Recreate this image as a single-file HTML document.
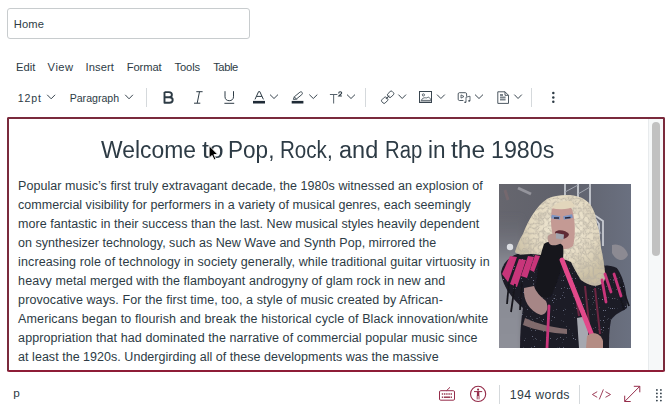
<!DOCTYPE html>
<html><head><meta charset="utf-8">
<style>
*{margin:0;padding:0;box-sizing:border-box}
html,body{width:672px;height:412px;overflow:hidden;background:#fff}
body{position:relative;font-family:"Liberation Sans",sans-serif;color:#2d3b45}
.t{position:absolute;white-space:nowrap;line-height:1}
#inp{position:absolute;left:7px;top:8px;width:243px;height:31px;border:1px solid #c8ccce;border-radius:3px;background:#fff}
.sep{position:absolute;width:1px;background:#d5d9dc}
#frame{position:absolute;left:7px;top:117px;width:658px;height:255px;border:2px solid #7a2a3c;border-bottom-color:#8e1d37;border-radius:2px}
#track{position:absolute;left:648px;top:119px;width:15px;height:251px;background:#f6f8f9;border-left:1px solid #e8ebed}
#thumb{position:absolute;left:652px;top:122px;width:8px;height:134px;background:#c1c1c1;border-radius:4px}
svg{position:absolute;overflow:visible}
</style></head><body>
<div id="inp"></div>

<!-- toolbar separators -->
<div class="sep" style="left:146px;top:88px;height:19px"></div>
<div class="sep" style="left:365.2px;top:88px;height:19px"></div>
<div class="sep" style="left:531.3px;top:88px;height:19px"></div>

<!-- toolbar icons -->
<svg width="672" height="120" style="left:0;top:0" fill="none" stroke="#2d3b45" stroke-width="1">
  <g stroke="#3a4650" stroke-width="1">
    <polyline points="47.2,94.8 51.15,98.8 55.1,94.8"/>
    <polyline points="125.2,94.8 129.05,98.8 132.9,94.8"/>
    <polyline points="270,94.6 274,98.5 278,94.6"/>
    <polyline points="309.3,94.6 313.3,98.5 317.3,94.6"/>
    <polyline points="347,94.6 351,98.5 355,94.6"/>
    <polyline points="398.4,94.6 402.2,98.5 406,94.6"/>
    <polyline points="437,94.6 440.9,98.5 444.8,94.6"/>
    <polyline points="475,94.6 479,98.5 483,94.6"/>
    <polyline points="514.3,94.6 518.05,98.5 521.8,94.6"/>
  </g>
  <!-- B -->
  <path d="M164.5,92.1 H168.9 C170.9,92.1 171.9,93.3 171.9,94.7 C171.9,96.1 170.9,97.3 168.9,97.3 H164.5 M164.5,97.3 H169.4 C171.6,97.3 172.7,98.6 172.7,100.05 C172.7,101.5 171.6,102.75 169.4,102.75 H164.5 Z M164.5,92.1 V102.75" stroke-width="1.9" stroke-linejoin="round"/>
  <!-- I -->
  <path d="M196.3,91.7 h6.3 M194,103.2 h6.3 M199.5,91.7 l-2.3,11.5" stroke-width="1"/>
  <!-- U -->
  <path d="M225,91.2 v5.6 c0,2.4 1.8,3.9 4.25,3.9 c2.45,0 4.25,-1.5 4.25,-3.9 v-5.6" stroke-width="1"/>
  <path d="M224.4,103.3 h9.8" stroke-width="1"/>
  <!-- A text color -->
  <path d="M255,99.4 L258.6,91.6 h1.2 L263.4,99.4 M256.5,96.4 h5.4" stroke-width="1" stroke="#2d3b45"/>
  <rect x="253" y="100.9" width="12" height="2.6" fill="#1f2b36" stroke="none"/>
  <!-- highlighter -->
  <path d="M293.4,99.4 l0.9,-2.6 l5.6,-4.6 c0.7,-0.6 1.7,-0.5 2.2,0.2 c0.5,0.7 0.4,1.6 -0.3,2.2 l-5.6,4.6 z M294.3,96.8 l2.5,2.7" stroke-width="0.9" stroke="#2d3b45"/>
  <rect x="291.7" y="100.9" width="11.7" height="2.6" fill="#1f2b36" stroke="none"/>
  <!-- T2 -->
  <path d="M329.9,94.5 h7.5 M333.65,94.5 v9" stroke="#56616b" stroke-width="1"/>
  <path d="M338.7,93.4 c0,-1.1 0.7,-1.6 1.5,-1.6 c0.9,0 1.5,0.5 1.5,1.3 c0,1.1 -2.4,2.1 -3,2.9 h3.2" stroke="#2d3b45" stroke-width="1.1"/>
  <!-- link -->
  <g transform="rotate(-45 387.6 97.3)" stroke-width="0.9" stroke="#3a4650">
    <rect x="380.4" y="95" width="6.2" height="4.6" rx="1.5"/>
    <rect x="388.8" y="95" width="6.2" height="4.6" rx="1.5"/>
    <path d="M385.2,97.3 h4.8" stroke-width="1"/>
  </g>
  <!-- image -->
  <rect x="419.5" y="91.5" width="12" height="11" stroke-width="1" stroke="#3a4650"/>
  <path d="M420.3,101.7 h10.4" stroke-width="0.5" stroke="#3a4650"/>
  <circle cx="423.4" cy="94.9" r="1.1" stroke-width="0.8" stroke="#3a4650"/>
  <path d="M421,100.4 C422.3,98.6 423.8,97.4 425.4,97.8 C426.6,98.4 427.4,97.2 428.6,97.2 C429.8,97.6 430.6,99 430.9,100.4 Z" stroke-width="0.8" stroke="#3a4650"/>
  <!-- media -->
  <path d="M466.6,96.5 v-2.6 c0,-0.7 -0.5,-1.2 -1.2,-1.2 h-6 c-0.7,0 -1.2,0.5 -1.2,1.2 v5.4 c0,0.7 0.5,1.2 1.2,1.2 h4" stroke-width="0.9" stroke="#3a4650"/>
  <path d="M461,94.9 v3.2 l3,-1.6 z" stroke-width="0.8" stroke="#3a4650"/>
  <path d="M466,102.2 v-5 l4,-1 v4.6" stroke-width="0.8" stroke="#3a4650"/>
  <ellipse cx="465.2" cy="102.3" rx="1" ry="0.8" fill="#3a4650" stroke="none"/>
  <ellipse cx="469.2" cy="100.9" rx="1" ry="0.8" fill="#3a4650" stroke="none"/>
  <!-- document -->
  <path d="M497.8,91.8 h7.2 l3.5,3.5 v8.1 h-10.7 z M505,91.8 v3.5 h3.5" stroke-width="0.9" stroke="#3a4650"/>
  <path d="M500,94 h3 v2 h-3 z M500,96.6 h5.6 v1.6 h-5.6 z M500,98.8 h5.6 v1.6 h-5.6 z" fill="#7d868e" stroke="none"/>
  <!-- dots -->
  <circle cx="553.3" cy="93" r="1.25" fill="#2d3b45" stroke="none"/>
  <circle cx="553.3" cy="97.4" r="1.25" fill="#2d3b45" stroke="none"/>
  <circle cx="553.3" cy="101.8" r="1.25" fill="#2d3b45" stroke="none"/>
</svg>

<div id="frame"></div>
<div id="track"></div>
<div id="thumb"></div>

<!-- photo -->
<svg width="132" height="164" style="left:499px;top:184px;overflow:hidden" viewBox="0 0 132 164">
  <defs>
    <linearGradient id="bg" x1="0" y1="0" x2="1" y2="0">
      <stop offset="0" stop-color="#66666e"/>
      <stop offset="0.5" stop-color="#5f616b"/>
      <stop offset="1" stop-color="#6a7080"/>
    </linearGradient>
    <linearGradient id="lft" x1="0" y1="0" x2="0" y2="1">
      <stop offset="0" stop-color="#6e6f78" stop-opacity="0"/>
      <stop offset="0.35" stop-color="#888a93"/>
      <stop offset="1" stop-color="#8e9099"/>
    </linearGradient>
    <radialGradient id="hairg" cx="0.55" cy="0.35" r="0.6">
      <stop offset="0" stop-color="#f2ebd8"/>
      <stop offset="0.6" stop-color="#e4dac2"/>
      <stop offset="1" stop-color="#cabfa4"/>
    </radialGradient>
    <filter id="soft" x="-10%" y="-10%" width="120%" height="120%"><feGaussianBlur stdDeviation="0.6"/></filter>
    <filter id="soft2" x="-30%" y="-30%" width="160%" height="160%"><feGaussianBlur stdDeviation="3"/></filter>
    <filter id="curl" x="-5%" y="-5%" width="110%" height="110%">
      <feTurbulence type="turbulence" baseFrequency="0.2" numOctaves="2" seed="7" result="n"/>
      <feColorMatrix in="n" type="matrix" values="0 0 0 0 0.47  0 0 0 0 0.43  0 0 0 0 0.36  0 0 0 -1.8 0.75" result="dark"/>
      <feComposite in="dark" in2="SourceGraphic" operator="in" result="dk"/>
      <feMerge><feMergeNode in="SourceGraphic"/><feMergeNode in="dk"/></feMerge>
      <feGaussianBlur stdDeviation="0.45"/>
    </filter>
    <filter id="sparkle" x="0" y="0" width="100%" height="100%">
      <feTurbulence type="fractalNoise" baseFrequency="0.9" numOctaves="1" seed="11" result="n"/>
      <feColorMatrix in="n" type="matrix" values="0 0 0 0 0.2  0 0 0 0 0.22  0 0 0 0 0.32  0 0 0 9 -6.2" result="s"/>
      <feComposite in="s" in2="SourceGraphic" operator="in" result="sp"/>
      <feMerge><feMergeNode in="SourceGraphic"/><feMergeNode in="sp"/></feMerge>
    </filter>
  </defs>
  <rect width="132" height="164" fill="url(#bg)"/>
  <rect x="-6" y="30" width="30" height="140" fill="url(#lft)" filter="url(#soft2)"/>
  <g filter="url(#soft)">
  <path d="M6,6 L9,16" stroke="#74686e" stroke-width="3"/>
  <path d="M19,4 L32,10" stroke="#94949c" stroke-width="3"/>
  <circle cx="11" cy="63" r="3.2" fill="#dcdee3"/>
  <path d="M66,0 V18 M79,0 V16 M91,0 V28 L100,40 V62 M91,28 L104,37 V62" stroke="#c6c9d0" stroke-width="1.8" fill="none"/>
  <path d="M66,8 L79,1 M79,10 L91,3 M79,14 L91,22 M93,31 L102,50" stroke="#a2a6b0" stroke-width="1" fill="none"/>
  <path d="M113,61 C119,59 127,63 129,71 C125,79 117,77 113,69 Z" fill="#8c8a92"/>
  </g>
  <!-- body -->
  <g filter="url(#sparkle)">
  <path d="M2,88 C4,78 12,70 26,68 C42,66 62,70 76,78 C90,86 106,78 118,84 C126,96 128,110 128,124 C122,128 116,130 112,136 C110,146 110,156 110,164 H21 C21,150 22,136 24,124 C14,116 3,102 2,88 Z" fill="#1d1c27"/>
  </g>
  <!-- hair -->
  <g filter="url(#curl)">
  <path d="M16,68 C18,62 20,56 24,50 C27,42 30,36 34,30 C38,24 42,19 48,15 C54,12 60,11 68,11 C76,11 84,13 90,19 C95,25 97,32 98,40 C101,48 101,56 102,64 C104,72 105,80 106,88 C107,95 105,100 100,101 C94,103 88,100 82,96 C78,90 75,84 72,78 C66,75 58,73 50,73 C44,71 38,70 32,70 C26,70 20,72 16,68 Z" fill="url(#hairg)"/>
  </g>
  <g filter="url(#soft)">
  <!-- face -->
  <path d="M53,25 C57,20 69,20 73,25 C76,35 77,50 74,62 C68,67 60,66 56,58 C52,48 51,36 53,25 Z" fill="#c49a94"/>
  <path d="M52,24 C60,26 69,26 76,22 L72,17 C66,17 58,17 52,24 Z" fill="#e2d6bc"/>
  <path d="M52.5,32.5 l8.5,1.5 M64.5,34 l9,-2" stroke="#7d95c4" stroke-width="3.6"/>
  <path d="M55,34 l5,0 M66,34 l5.5,-0.5" stroke="#25253a" stroke-width="1.4"/>
  <path d="M56,48 C59,45 67,46 70,50 C69,55 61,57 57,53 Z" fill="#5e2a34"/>
  <!-- glove arm -->
  <path d="M45,60 C50,56 60,56 64,62 C66,76 60,96 52,112 C46,116 38,112 36,106 C38,92 40,74 45,60 Z" fill="#15151d"/>
  <path d="M49,52 C53,48 62,49 64,55 C64,60 58,62 52,61 C49,59 48,55 49,52 Z" fill="#b89690"/>
  <path d="M57,49 l8,1.5 l-0.5,5 l-7.5,-1 z" fill="#a2a4ae"/>
  <!-- skin arm -->
  <path d="M25,104 C24,116 30,127 42,131 C48,130 50,124 47,117 C41,112 37,108 35,102 Z" fill="#a68686"/>
  <!-- midriff -->
  <path d="M26,134 C38,140 52,143 68,145 L68,150 C52,149 36,146 24,141 Z" fill="#806a6c"/>
  <!-- pink fringe left -->
  <g fill="#c8347a">
    <path d="M3,90 L11,72 L18,73 L9,98 Z"/>
    <path d="M11,100 L20,75 L27,76 L18,103 Z"/>
    <path d="M22,92 L29,72 L35,73 L28,94 Z"/>
    <path d="M31,86 L36,71 L41,72 L35,88 Z"/>
  </g>
  <g stroke="#18171f" stroke-width="1.8" fill="none">
    <path d="M10,98 L8,120"/><path d="M16,100 L12,128"/><path d="M23,98 L21,126"/><path d="M117,98 L125,126"/><path d="M122,100 L130,122"/>
  </g>
  <!-- right fringe pink -->
  <g stroke="#c8347a" stroke-width="2.8" fill="none" stroke-linecap="round">
    <path d="M106,90 L112,108"/><path d="M115,90 L122,112"/><path d="M103,96 L107,118"/>
    <path d="M50,122 L48,164"/>
  </g>
  <g stroke="#6e2642" stroke-width="2" fill="none">
    <path d="M86,102 L90,140"/><path d="M96,104 L101,150"/><path d="M76,106 L80,132"/>
  </g>
  <path d="M78,134 L88,132 L90,164 L80,164 Z" fill="#a6a8b0"/>
  <path d="M63,76 L94,154" stroke="#e2488a" stroke-width="4.8" stroke-linecap="round"/>
  <path d="M88,152 C93,147 102,149 104,157 L104,164 L87,164 Z" fill="#b48c84"/>
  </g>
</svg>

<!-- status bar -->
<div class="sep" style="left:499px;top:385px;height:19px"></div>
<div class="sep" style="left:579px;top:385px;height:19px"></div>
<svg width="672" height="412" style="left:0;top:0" fill="none" stroke="#952c4a" stroke-width="1">
  <!-- keyboard -->
  <rect x="439.5" y="390.7" width="15" height="9.5" rx="1.2"/>
  <path d="M446.5,390.7 L450,387.3" />
  <g fill="#8f2c45" stroke="none">
    <rect x="441.8" y="393.3" width="1.4" height="1.4"/><rect x="444" y="393.3" width="1.4" height="1.4"/><rect x="446.2" y="393.3" width="1.4" height="1.4"/><rect x="448.4" y="393.3" width="1.4" height="1.4"/><rect x="450.6" y="393.3" width="1.4" height="1.4"/>
    <rect x="441.8" y="396.5" width="1.4" height="1.4"/><rect x="444" y="396.5" width="6" height="1.4"/><rect x="450.6" y="396.5" width="1.4" height="1.4"/>
  </g>
  <!-- a11y -->
  <circle cx="478.1" cy="393.9" r="7.6" stroke-width="1.1"/>
  <circle cx="478.1" cy="389.6" r="1.1" fill="#8f2c45" stroke="none"/>
  <path d="M474,391.6 h8.2" stroke-width="1"/>
  <path d="M478.1,391.6 v4.4" stroke-width="2.4"/>
  <path d="M477.2,395.8 v3.6 M479,395.8 v3.6" stroke-width="0.9"/>
  <!-- code -->
  <path d="M597.2,391.7 L592.4,394.5 L597.2,397.3 M605.5,391.7 L610.5,394.5 L605.5,397.3 M599.3,399.4 L603.4,389.4" stroke-width="0.9"/>
  <!-- expand -->
  <path d="M624.7,401.5 L639.8,386.3 M633.8,386.3 H639.8 V392.3 M624.7,395.7 V401.5 H630.7" stroke-width="1"/>
  <!-- grip -->
  <g fill="#2d3b45" stroke="none">
    <circle cx="656.9" cy="389.9" r="0.9"/><circle cx="660.9" cy="389.9" r="0.9"/>
    <circle cx="656.9" cy="393.4" r="0.9"/><circle cx="660.9" cy="393.4" r="0.9"/>
    <circle cx="656.9" cy="396.9" r="0.9"/><circle cx="660.9" cy="396.9" r="0.9"/>
    <circle cx="656.9" cy="400.6" r="0.9"/><circle cx="660.9" cy="400.6" r="0.9"/>
  </g>
</svg>

<div class="t" style="left:18.12px;top:179.82px;font-size:12.5px;letter-spacing:0.052px;color:#2d3b45">Popular music’s first truly extravagant decade, the 1980s witnessed an explosion of</div>
<div class="t" style="left:18.12px;top:198.82px;font-size:12.5px;letter-spacing:0.013px;color:#2d3b45">commercial visibility for performers in a variety of musical genres, each seemingly</div>
<div class="t" style="left:18.12px;top:217.82px;font-size:12.5px;letter-spacing:0.039px;color:#2d3b45">more fantastic in their success than the last. New musical styles heavily dependent</div>
<div class="t" style="left:18.12px;top:236.82px;font-size:12.5px;letter-spacing:0.017px;color:#2d3b45">on synthesizer technology, such as New Wave and Synth Pop, mirrored the</div>
<div class="t" style="left:18.12px;top:255.82px;font-size:12.5px;letter-spacing:0.109px;color:#2d3b45">increasing role of technology in society generally, while traditional guitar virtuosity in</div>
<div class="t" style="left:18.12px;top:274.82px;font-size:12.5px;letter-spacing:0.075px;color:#2d3b45">heavy metal merged with the flamboyant androgyny of glam rock in new and</div>
<div class="t" style="left:18.12px;top:293.82px;font-size:12.5px;letter-spacing:0.083px;color:#2d3b45">provocative ways. For the first time, too, a style of music created by African-</div>
<div class="t" style="left:18.12px;top:312.82px;font-size:12.5px;letter-spacing:0.114px;color:#2d3b45">Americans began to flourish and break the historical cycle of Black innovation/white</div>
<div class="t" style="left:18.12px;top:331.82px;font-size:12.5px;letter-spacing:0.098px;color:#2d3b45">appropriation that had dominated the narrative of commercial popular music since</div>
<div class="t" style="left:18.12px;top:350.82px;font-size:12.5px;letter-spacing:0.030px;color:#2d3b45">at least the 1920s. Undergirding all of these developments was the massive</div>
<div class="t" style="left:100.59px;top:139.43px;font-size:23px;transform:scaleX(0.9945);transform-origin:0 0;color:#2d3b45">Welcome</div>
<div class="t" style="left:201.69px;top:139.43px;font-size:23px;transform:scaleX(1.1209);transform-origin:0 0;color:#2d3b45">to</div>
<div class="t" style="left:227.79px;top:139.43px;font-size:23px;transform:scaleX(0.9806);transform-origin:0 0;color:#2d3b45">Pop,</div>
<div class="t" style="left:280.49px;top:139.43px;font-size:23px;transform:scaleX(0.8947);transform-origin:0 0;color:#2d3b45">Rock,</div>
<div class="t" style="left:339.39px;top:139.43px;font-size:23px;transform:scaleX(1.0217);transform-origin:0 0;color:#2d3b45">and</div>
<div class="t" style="left:385.39px;top:139.43px;font-size:23px;transform:scaleX(0.8816);transform-origin:0 0;color:#2d3b45">Rap</div>
<div class="t" style="left:427.99px;top:139.43px;font-size:23px;transform:scaleX(0.9778);transform-origin:0 0;color:#2d3b45">in</div>
<div class="t" style="left:451.39px;top:139.43px;font-size:23px;transform:scaleX(1.0726);transform-origin:0 0;color:#2d3b45">the</div>
<div class="t" style="left:491.49px;top:139.43px;font-size:23px;transform:scaleX(1.0102);transform-origin:0 0;color:#2d3b45">1980s</div>
<div class="t" style="left:16.02px;top:61.72px;font-size:11.2px;letter-spacing:-0.002px;color:#2d3b45">Edit</div>
<div class="t" style="left:47.62px;top:61.72px;font-size:11.2px;letter-spacing:0.509px;color:#2d3b45">View</div>
<div class="t" style="left:85.62px;top:61.72px;font-size:11.2px;letter-spacing:0.058px;color:#2d3b45">Insert</div>
<div class="t" style="left:126.72px;top:61.72px;font-size:11.2px;letter-spacing:-0.092px;color:#2d3b45">Format</div>
<div class="t" style="left:174.62px;top:61.72px;font-size:11.2px;letter-spacing:-0.162px;color:#2d3b45">Tools</div>
<div class="t" style="left:213.22px;top:61.72px;font-size:11.2px;letter-spacing:-0.444px;color:#2d3b45">Table</div>
<div class="t" style="left:13.82px;top:18.52px;font-size:11.2px;letter-spacing:0.110px;color:#2d3b45">Home</div>
<div class="t" style="left:17.86px;top:93.13px;font-size:10.6px;letter-spacing:0.798px;color:#2d3b45">12pt</div>
<div class="t" style="left:69.66px;top:93.13px;font-size:10.6px;letter-spacing:0.004px;color:#2d3b45">Paragraph</div>
<div class="t" style="left:13.37px;top:387.61px;font-size:11.8px;letter-spacing:0.570px;color:#2d3b45">p</div>
<div class="t" style="left:509.84px;top:388.89px;font-size:12.3px;letter-spacing:0.366px;color:#2d3b45">194 words</div>
<!-- mouse cursor -->
<svg width="20" height="20" style="left:0;top:0">
  <path d="M209.1,145.6 L209.1,158.3 L212,155.4 L214.1,159.9 L216,159.1 L213.9,154.6 L217.9,154.6 Z" fill="#000" stroke="#fff" stroke-width="0.9" stroke-linejoin="round"/>
</svg>


</body></html>
